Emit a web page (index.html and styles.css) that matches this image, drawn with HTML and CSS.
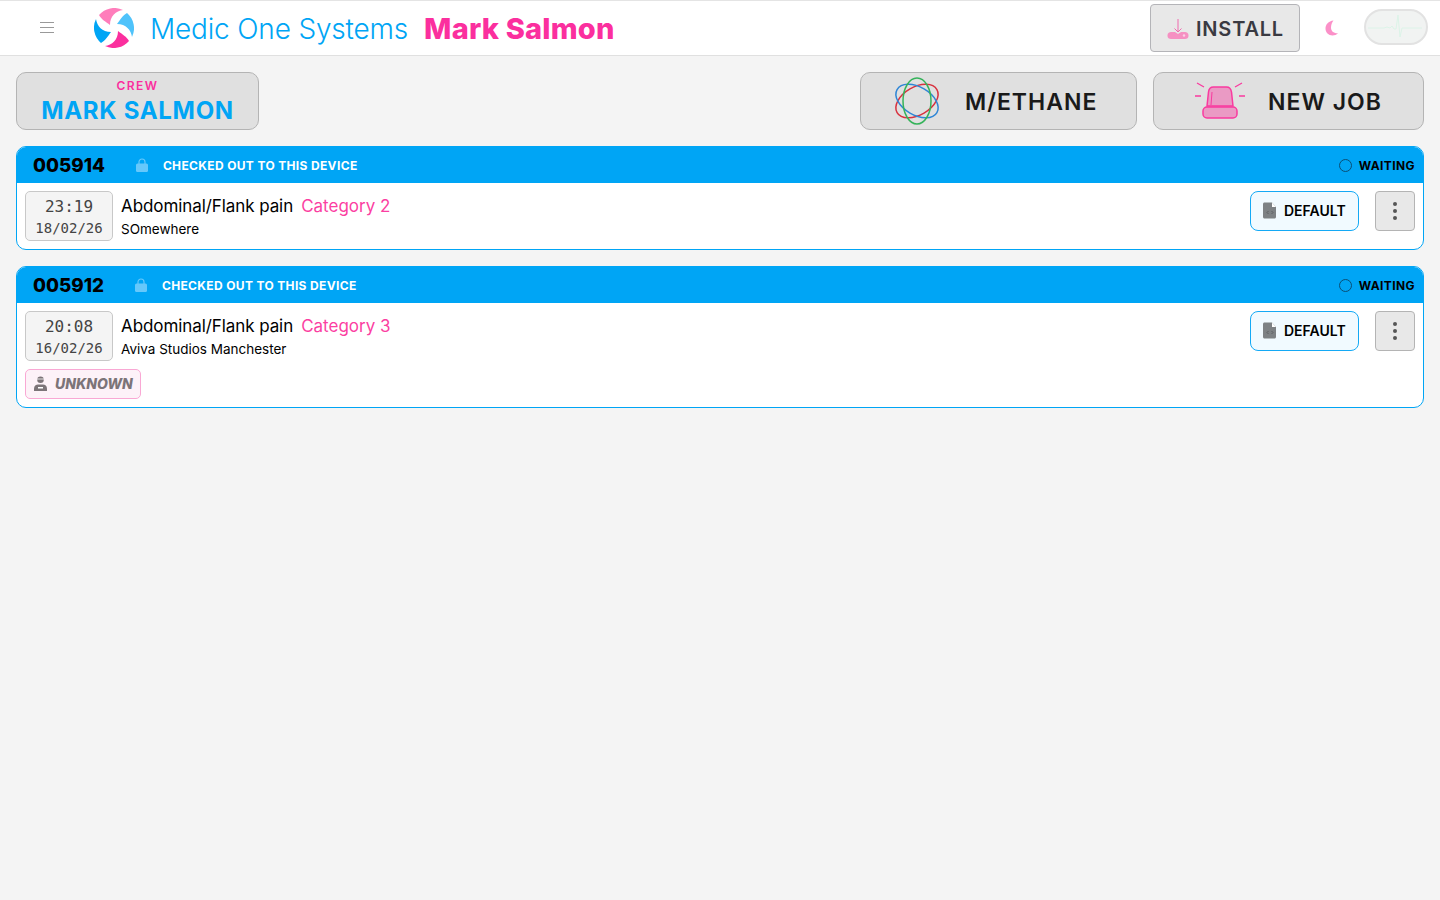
FILE: index.html
```html
<!DOCTYPE html>
<html lang="en">
<head>
  <meta charset="UTF-8">
  <meta name="viewport" content="width=device-width, initial-scale=1.0">
  <title>Medic One Systems</title>
  <link rel="stylesheet" href="styles.css">
</head>
<body>
  <header class="topbar">
    <button class="menu-button" aria-label="Menu">
      <svg width="14" height="12" viewBox="0 0 14 12"><path d="M0 .5h14M0 5.500h14M0 10.500h14" stroke="#999" stroke-width="1" fill="none"/></svg>
    </button>
    <svg class="logo" width="40" height="40" viewBox="-20 -20 40 40">
      <path d="M-15-13A20 20 0 0 1 9-18C2-17-4-12-4-3C-8-6-13-9-15-13Z" fill="#ff7dbb"/>
      <path d="M-15-13A20 20 0 0 1 9-18C2-17-4-12-4-3C-8-6-13-9-15-13Z" fill="#4fc3fb" transform="rotate(90)"/>
      <path d="M-15-13A20 20 0 0 1 9-18C2-17-4-12-4-3C-8-6-13-9-15-13Z" fill="#fb2f9e" transform="rotate(180)"/>
      <path d="M-15-13A20 20 0 0 1 9-18C2-17-4-12-4-3C-8-6-13-9-15-13Z" fill="#00a5f5" transform="rotate(270)"/>
    </svg>
    <span class="app-name">Medic One Systems</span>
    <span class="user-name">Mark Salmon</span>
    <button class="install-button">
      <svg width="22" height="22" viewBox="0 0 22 22">
        <path d="M11 1v13M7.500 10.500 11 14l3.500-3.500" stroke="#f06aae" stroke-width="1" fill="none"/>
        <path d="M4 14h4l3 2 3-2h4c1.500 0 3.500 1 3.500 3v1c0 2-1.500 3-3.500 3H4c-2 0-3.500-1-3.500-3v-1c0-2 2-3 3.500-3Z" fill="#f590c2"/>
        <circle cx="17" cy="17.500" r="1.200" fill="#fbd0e5"/>
      </svg>
      INSTALL
    </button>
    <svg class="moon" width="16" height="16" viewBox="0 0 16 16"><path d="M9.500 .5C4.500 1 1.500 4.500 1.500 8.500s3 7 7 7c2 0 4-.8 5.500-2.200C9.500 13.500 7 11 7 7.500 7 5 8 2.500 9.500 .5Z" fill="#fb90c8"/></svg>
    <div class="pulse-pill">
      <svg width="58" height="32" viewBox="0 0 58 32"><path d="M1 17h16l3-1 3 1 2-2 2 3 2 0 2-14 2 22 2-9h20" stroke="#dcf3e8" stroke-width="1" fill="none"/></svg>
    </div>
  </header>

  <main class="content">
    <div class="action-row">
      <button class="big-button crew-button">
        <span class="crew-label">CREW</span>
        <span class="crew-name">MARK SALMON</span>
      </button>
      <div class="action-spacer"></div>
      <button class="big-button methane-button">
        <svg width="50" height="50" viewBox="-25 -25 50 50" fill="none" stroke-width="1.500">
          <ellipse rx="23" ry="14" stroke="#d8323f" transform="rotate(-30)"/>
          <ellipse rx="23" ry="14" stroke="#2f86d6" transform="rotate(30)"/>
          <ellipse rx="23" ry="14" stroke="#35b35a" transform="rotate(90)"/>
        </svg>
        <span>M/ETHANE</span>
      </button>
      <button class="big-button newjob-button">
        <svg width="52" height="38" viewBox="0 0 52 38" fill="none" stroke="#f93a9f" stroke-width="1.500">
          <path d="M3 1l7 4M48 1l-7 4M1 14h6M51 14h-6" stroke-width="1.300"/>
          <path d="M13 24l1.500-14c.3-3 2-5 5-5h13c3 0 4.500 2 5 5L39 24Z" fill="#ea9ac4"/>
          <path d="M17 23l1-13" stroke-width="1"/>
          <rect x="9" y="25" width="34" height="11" rx="4" fill="#ea9ac4"/>
        </svg>
        <span>NEW JOB</span>
      </button>
    </div>

    <section class="job-card">
      <div class="job-head">
        <span class="job-number">005914</span>
        <svg class="lock" width="12" height="14" viewBox="0 0 12 14"><path d="M3 6V4a3 3 0 0 1 6 0v2" stroke="#66c8fb" stroke-width="1.200" fill="none"/><rect y="5.500" width="12" height="8.500" rx="1.500" fill="#66c8fb"/></svg>
        <span class="job-checked">CHECKED OUT TO THIS DEVICE</span>
        <span class="job-status"><i class="status-ring"></i>WAITING</span>
      </div>
      <div class="job-body">
        <div class="job-time"><span class="clock">23:19</span><span class="date">18/02/26</span></div>
        <div class="job-info">
          <div class="job-title">Abdominal/Flank pain<span class="category">Category 2</span></div>
          <div class="job-place">SOmewhere</div>
        </div>
        <button class="default-button">
          <svg width="14" height="17" viewBox="0 0 14 16"><path d="M1.500 0H9l4 4.500v10c0 .8-.7 1.500-1.500 1.500h-10C.7 16 0 15.300 0 14.500v-13C0 .7.700 0 1.500 0Z" fill="#7d8184"/><path d="M9 0v4.500h4" fill="#fff"/><path d="M5.500 8.500 4 10l1.500 1.500M8.500 8.500 10 10l-1.500 1.500" stroke="#5c5f62" fill="none"/></svg>
          DEFAULT
        </button>
        <button class="more-button" aria-label="More"><i></i><i></i><i></i></button>
      </div>
    </section>

    <section class="job-card">
      <div class="job-head">
        <span class="job-number">005912</span>
        <svg class="lock" width="12" height="14" viewBox="0 0 12 14"><path d="M3 6V4a3 3 0 0 1 6 0v2" stroke="#66c8fb" stroke-width="1.200" fill="none"/><rect y="5.500" width="12" height="8.500" rx="1.500" fill="#66c8fb"/></svg>
        <span class="job-checked">CHECKED OUT TO THIS DEVICE</span>
        <span class="job-status"><i class="status-ring"></i>WAITING</span>
      </div>
      <div class="job-body">
        <div class="job-time"><span class="clock">20:08</span><span class="date">16/02/26</span></div>
        <div class="job-info">
          <div class="job-title">Abdominal/Flank pain<span class="category">Category 3</span></div>
          <div class="job-place">Aviva Studios Manchester</div>
        </div>
        <button class="default-button">
          <svg width="14" height="17" viewBox="0 0 14 16"><path d="M1.500 0H9l4 4.500v10c0 .8-.7 1.500-1.500 1.500h-10C.7 16 0 15.300 0 14.500v-13C0 .7.700 0 1.500 0Z" fill="#7d8184"/><path d="M9 0v4.500h4" fill="#fff"/><path d="M5.500 8.500 4 10l1.500 1.500M8.500 8.500 10 10l-1.500 1.500" stroke="#5c5f62" fill="none"/></svg>
          DEFAULT
        </button>
        <button class="more-button" aria-label="More"><i></i><i></i><i></i></button>
      </div>
      <div class="job-tags">
        <span class="unknown-tag">
          <svg width="13" height="15" viewBox="0 0 13 15"><circle cx="6.500" cy="3.800" r="3.300" fill="#7c7478"/><path d="M3 3h7" stroke="#fff" stroke-width=".8"/><path d="M0 15v-2.500C0 10 2 8.500 4 8.500h5c2 0 4 1.500 4 4V15Z" fill="#7c7478"/><rect x="4" y="11" width="5" height="1.500" fill="#fff"/></svg>
          UNKNOWN
        </span>
      </div>
    </section>
  </main>
</body>
</html>
```

FILE: styles.css
```css
* {
  box-sizing: border-box;
}

body {
  margin: 0;
  min-height: 100vh;
  background: #f4f4f4;
  font-family: "Inter", "Liberation Sans", sans-serif;
  color: #000;
}

button {
  font-family: inherit;
  cursor: pointer;
}

/* top bar */
.topbar {
  display: flex;
  align-items: center;
  height: 56px;
  background: #fff;
  border-top: 1px solid #e4e4e4;
  border-bottom: 1px solid #e0e0e0;
  padding-left: 40px;
  padding-right: 12px;
}

.menu-button {
  display: flex;
  padding: 0;
  border: 0;
  background: none;
  margin-right: 40px;
}

.logo {
  margin-right: 16px;
}

.app-name {
  font-size: 28px;
  font-weight: 300;
  letter-spacing: -.18px;
  color: #00a5f5;
  margin-right: 16px;
  padding-top: 2px;
}

.user-name {
  font-size: 29px;
  font-weight: 800;
  letter-spacing: .2px;
  color: #fb2f9e;
  margin-right: auto;
  padding-top: 1px;
}

.install-button {
  display: flex;
  align-items: center;
  gap: 7px;
  width: 150px;
  height: 48px;
  padding: 2px 0 0 16px;
  background: #e8e8e8;
  border: 1px solid #b4b4b8;
  border-radius: 4px;
  font-size: 20px;
  font-weight: 600;
  letter-spacing: .8px;
  color: #3a3a42;
}

.moon {
  margin-left: 24px;
  margin-right: 24px;
}

.pulse-pill {
  display: flex;
  align-items: center;
  justify-content: center;
  width: 64px;
  height: 36px;
  margin-bottom: 3px;
  border: 2px solid #e2e2e2;
  border-radius: 18px;
  background: #f1f3f2;
}

/* page */
.content {
  display: flex;
  flex-direction: column;
  gap: 16px;
  padding: 16px;
}

.action-row {
  display: flex;
  gap: 16px;
}

.action-spacer {
  flex: 1;
}

.big-button {
  display: flex;
  align-items: center;
  height: 58px;
  background: #e0e0e0;
  border: 1px solid #b4b4b4;
  border-radius: 10px;
  padding: 0;
  font-size: 23px;
  font-weight: 600;
  letter-spacing: 1px;
  color: #1a1a1a;
}

.big-button span {
  padding-top: 1px;
}

.crew-button {
  flex-direction: column;
  justify-content: center;
  width: 243px;
  gap: 2px;
}

.big-button .crew-label {
  padding: 0;
  font-size: 12px;
  letter-spacing: 1.500px;
  font-weight: 600;
  color: #fb2f9e;
}

.crew-name {
  font-size: 24px;
  font-weight: 700;
  letter-spacing: .7px;
  color: #00a5f5;
  line-height: 29px;
}

.methane-button {
  width: 277px;
  padding-left: 31px;
  gap: 23px;
}

.newjob-button {
  width: 271px;
  padding-left: 40px;
  gap: 22px;
}

/* job cards */
.job-card {
  background: #fff;
  border: 1px solid #00a5f5;
  border-radius: 10px;
  overflow: hidden;
}

.job-head {
  display: flex;
  align-items: center;
  height: 36px;
  background: #00a5f5;
  padding: 0 8px 0 16px;
}

.job-number {
  font-size: 18.800px;
  font-weight: 800;
  margin-right: 31px;
}

.lock {
  margin-right: 15px;
}

.job-checked {
  font-size: 12px;
  font-weight: 700;
  letter-spacing: .35px;
  color: #fff;
}

.job-status {
  display: flex;
  align-items: center;
  gap: 7px;
  margin-left: auto;
  font-size: 12px;
  font-weight: 700;
  letter-spacing: .4px;
}

.status-ring {
  width: 13px;
  height: 13px;
  border: 1.500px solid #0b4f75;
  border-radius: 50%;
}

.job-body {
  display: flex;
  align-items: flex-start;
  padding: 8px;
}

.job-time {
  display: flex;
  flex-direction: column;
  align-items: center;
  width: 88px;
  height: 50px;
  padding-top: 1px;
  background: #f4f4f4;
  border: 1px solid #c8c8c8;
  border-radius: 5px;
  font-family: "DejaVu Sans Mono", "Liberation Mono", monospace;
  color: #444;
  margin-right: 8px;
}

.clock {
  font-size: 16px;
  line-height: 27px;
}

.date {
  font-size: 14px;
  line-height: 17px;
}

.job-info {
  flex: 1;
}

.job-title {
  font-size: 17px;
  letter-spacing: -.08px;
  line-height: 28px;
  padding-top: 1px;
}

.category {
  color: #fb3fa2;
  font-weight: 400;
  letter-spacing: 0;
  margin-left: 8px;
}

.job-place {
  font-size: 13.500px;
  line-height: 19px;
}

.default-button {
  display: flex;
  align-items: center;
  gap: 7px;
  width: 109px;
  height: 40px;
  padding: 0 0 1px 12px;
  background: #f1faff;
  border: 1px solid #14a9f5;
  border-radius: 8px;
  font-size: 14px;
  font-weight: 600;
  color: #000;
}

.more-button {
  display: flex;
  flex-direction: column;
  align-items: center;
  justify-content: center;
  gap: 3px;
  width: 40px;
  height: 40px;
  padding: 0;
  margin-left: 16px;
  background: #e8e8e8;
  border: 1px solid #b4b4b4;
  border-radius: 4px;
}

.more-button i {
  width: 4px;
  height: 4px;
  border-radius: 50%;
  background: #555;
}

.job-tags {
  display: flex;
  padding: 0 8px 8px;
}

.unknown-tag {
  display: flex;
  align-items: center;
  gap: 8px;
  height: 30px;
  padding: 0 7px 1px 8px;
  background: #fdf2f8;
  border: 1px solid #f9a8d4;
  border-radius: 5px;
  font-size: 14px;
  font-weight: 800;
  font-style: italic;
  color: #7c7478;
}
```
